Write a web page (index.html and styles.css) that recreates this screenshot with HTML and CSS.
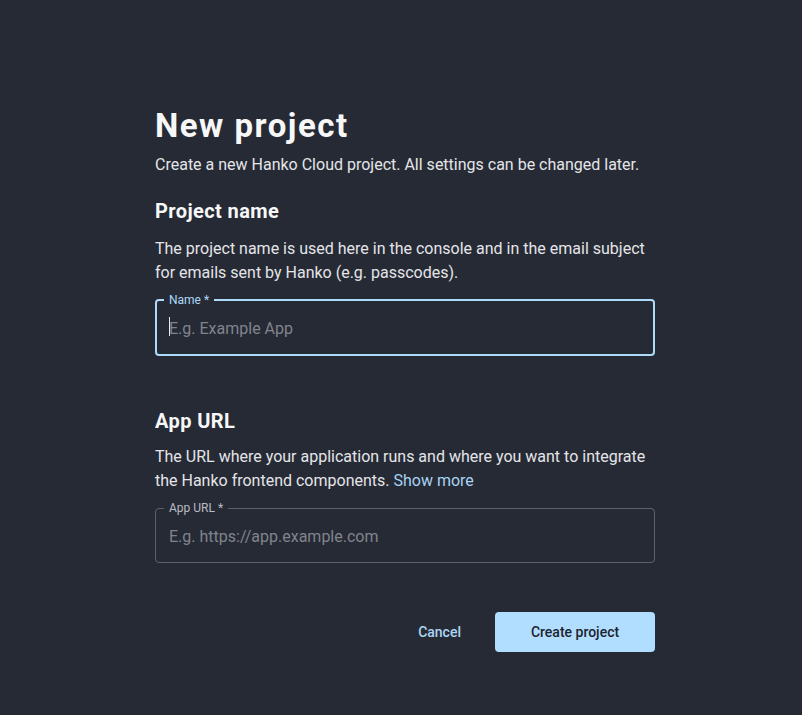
FILE: index.html
```html
<!DOCTYPE html>
<html lang="en">
<head>
<meta charset="utf-8">
<title>New project</title>
<link rel="stylesheet" href="styles.css">
</head>
<body>
<main class="page">
  <h1 class="title">New project</h1>
  <p class="subtitle">Create a new Hanko Cloud project. All settings can be changed later.</p>

  <h2 class="section-title">Project name</h2>
  <p class="desc">The project name is used here in the console and in the email subject for emails sent by Hanko (e.g. passcodes).</p>
  <fieldset class="field field-focused">
    <legend class="field-label">Name *</legend>
    <div class="field-body">
      <input class="field-input" type="text" placeholder="E.g. Example App">
      <span class="caret"></span>
    </div>
  </fieldset>

  <h2 class="section-title section-second">App URL</h2>
  <p class="desc desc-second">The URL where your application runs and where you want to integrate the Hanko frontend components.<a class="link" href="#">Show more</a></p>
  <fieldset class="field">
    <legend class="field-label">App URL *</legend>
    <div class="field-body">
      <input class="field-input" type="text" placeholder="E.g. https://app.example.com">
    </div>
  </fieldset>

  <div class="actions">
    <button class="btn btn-text" type="button">Cancel</button>
    <button class="btn btn-primary" type="button">Create project</button>
  </div>
</main>
</body>
</html>
```

FILE: styles.css
```css
html, body {
  margin: 0;
  padding: 0;
}
body {
  background: #262a35;
  color: #e4e5e8;
  font-family: Roboto, "Liberation Sans", sans-serif;
  min-height: 100vh;
}
.page {
  width: 500px;
  padding: 106px 0 40px 155px;
}
.title {
  margin: 0;
  font-size: 33px;
  line-height: 40px;
  font-weight: 700;
  letter-spacing: 1.5px;
  color: #f7f7f8;
}
.subtitle {
  margin: 7px 0 0;
  font-size: 16px;
  line-height: 24px;
}
.section-title {
  margin: 20px 0 0;
  font-size: 20px;
  line-height: 28px;
  font-weight: 700;
  letter-spacing: 0.4px;
  color: #f7f7f8;
}
.section-second {
  margin-top: 51px;
}
.desc {
  margin: 12px 0 0;
  font-size: 16px;
  line-height: 24px;
}
.desc-second {
  margin-top: 10px;
}
.link {
  display: inline-block;
  margin-left: 4px;
  color: #a6d3f2;
  text-decoration: none;
}
.field {
  margin: 7px 0 0;
  padding: 0;
  border: 1px solid #5d616b;
  border-radius: 4px;
  min-width: 0;
}
.field-label {
  margin-left: 8px;
  padding: 0 5px;
  font-size: 12px;
  line-height: 16px;
  color: #b9bcc2;
}
.field-body {
  position: relative;
}
.field-input {
  display: block;
  box-sizing: border-box;
  width: 100%;
  height: 46px;
  margin: 0;
  padding: 0 13px 6px;
  border: 0;
  outline: none;
  background: transparent;
  color: #e4e5e8;
  font-family: inherit;
  font-size: 16px;
}
.field-input::placeholder {
  color: #80848c;
}
.field-focused {
  border: 2px solid #acdaf8;
}
.field-focused .field-label {
  margin-left: 7px;
  color: #acdaf8;
}
.field-focused .field-input {
  padding-left: 12px;
}
.caret {
  position: absolute;
  left: 12px;
  top: 9px;
  width: 1px;
  height: 19px;
  background: #e8e9ec;
}
.actions {
  display: flex;
  justify-content: flex-end;
  align-items: center;
  gap: 18px;
  margin-top: 49px;
}
.btn {
  font-family: inherit;
  font-size: 14px;
  font-weight: 500;
  height: 40px;
  border-radius: 4px;
  border: 0;
  cursor: pointer;
}
.btn-text {
  background: transparent;
  color: #acd6f2;
  padding: 0 16px;
}
.btn-primary {
  width: 160px;
  background: #b1defe;
  color: #1e2330;
}
```
